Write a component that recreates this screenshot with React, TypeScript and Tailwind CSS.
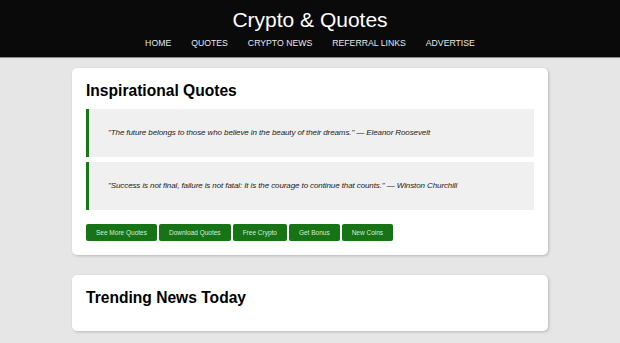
import React from "react";

const quotes = [
  { text: '"The future belongs to those who believe in the beauty of their dreams."', author: "Eleanor Roosevelt" },
  { text: '"Success is not final, failure is not fatal: It is the courage to continue that counts."', author: "Winston Churchill" },
];

const buttons = ["See More Quotes", "Download Quotes", "Free Crypto", "Get Bonus", "New Coins"];

export default function App() {
  return (
    <div className="min-h-[343px] bg-[#e6e6e6] font-['Liberation_Sans',Arial,sans-serif]">
      <header className="bg-[#0a0a0a] h-[58px] border-b border-[#888] flex flex-col items-center">
        <h1 className="text-white text-[21px] leading-none mt-[9px]">Crypto &amp; Quotes</h1>
        <nav className="flex gap-[20px] mt-[9px]">
          {["HOME", "QUOTES", "CRYPTO NEWS", "REFERRAL LINKS", "ADVERTISE"].map((n) => (
            <span key={n} className="text-[#e8e8e8] text-[8.7px] leading-none">{n}</span>
          ))}
        </nav>
      </header>
      <main className="w-[476px] mx-auto pt-[10px] flex flex-col gap-[20px]">
        <section className="bg-white rounded-[5px] shadow-[1px_1px_3px_rgba(0,0,0,0.2)] p-[14px]">
          <h2 className="text-[15.6px] font-bold leading-[18px] text-black">Inspirational Quotes</h2>
          <div className="mt-[9px] flex flex-col gap-[5px]">
            {quotes.map((q) => (
              <div key={q.author} className="bg-[#f0f0f0] border-l-[3px] border-[#157a15] h-[48px] pl-[19px] flex items-center">
                <p className="italic text-[8px] tracking-[-0.1px] text-[#222]">{q.text} — {q.author}</p>
              </div>
            ))}
          </div>
          <div className="mt-[14px] flex gap-[2px]">
            {buttons.map((b) => (
              <span key={b} className="bg-[#167316] text-[#d8ecd8] text-[6.5px] rounded-[2px] h-[17px] px-[10px] flex items-center">{b}</span>
            ))}
          </div>
        </section>
        <section className="bg-white rounded-[5px] shadow-[1px_1px_3px_rgba(0,0,0,0.2)] px-[14px] pt-[14px] h-[56px]">
          <h2 className="text-[15.6px] font-bold leading-[18px] text-black">Trending News Today</h2>
        </section>
      </main>
    </div>
  );
}
